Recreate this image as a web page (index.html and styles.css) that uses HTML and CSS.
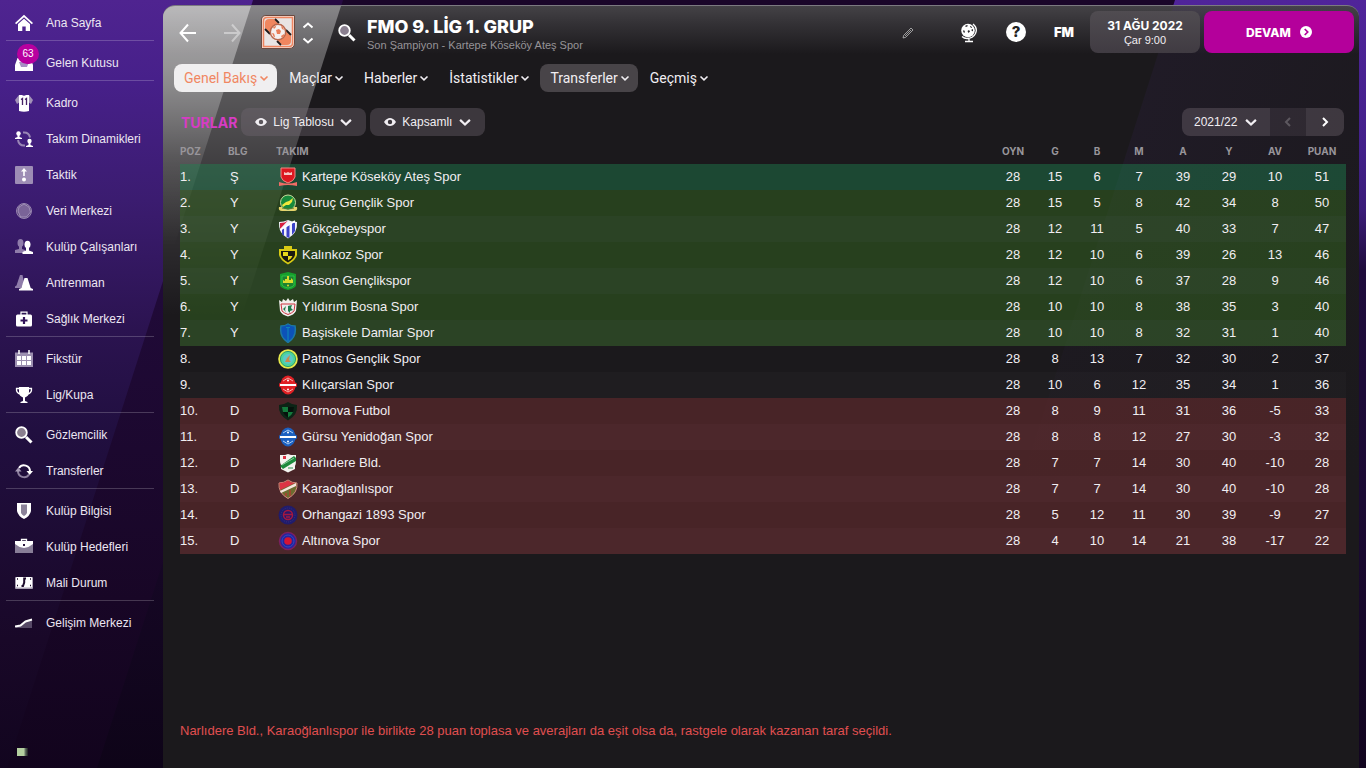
FILE: index.html
```
<!DOCTYPE html>
<html lang="tr">

<head>
	<meta charset="utf-8">
	<title>FMO 9. LİG 1. GRUP</title>
	<link rel="stylesheet" href="styles.css">
</head>

<body>
	<div class="backdrop backdrop-mid"></div>
	<div class="backdrop backdrop-left"></div>
	<div class="backdrop backdrop-right"></div>

	<!-- shared icons -->
	<svg class="defs" width="0" height="0">
		<symbol id="chev" viewBox="0 0 10 10"><path d="M1.500 3.500 5 6.800 8.500 3.500" fill="none" stroke="currentColor" stroke-width="1.600"/></symbol>
		<symbol id="eye" viewBox="0 0 12 8"><path fill="currentColor" fill-rule="evenodd" d="M0 4C2 1 4 0 6 0s4 1 6 4c-2 3-4 4-6 4S2 7 0 4zm6-2.200a2.200 2.200 0 1 0 0 4.400 2.200 2.200 0 0 0 0-4.400z"/></symbol>
		<symbol id="lens" viewBox="0 0 18 18"><circle cx="6.500" cy="6.500" r="5.300" fill="#8a7f8f" stroke="#fff" stroke-width="1.800"/><path d="M11 11l5.500 5.500" stroke="#fff" stroke-width="3"/></symbol>
	</svg>

	<div class="app">
		<nav class="sidebar">
			<ul>
				<li><a href="#"><svg viewBox="0 0 18 18"><path d="M0 9 9 .8 18 9l-1.200 1.200L9 3.200 1.200 10.200z" fill="#fff"/><path d="M3 10l6-5.300L15 10v7h-4.300v-4.500H7.300V17H3z" fill="#fff"/></svg>Ana Sayfa</a></li>
			</ul>
			<ul>
				<li><a href="#"><svg viewBox="0 0 18 18"><path d="M0 11l2.500-7h13L18 11v6H0z" fill="#fff"/><path d="M4 8h10l-2 5H6z" fill="#a78fc4"/></svg>Gelen Kutusu<span class="badge">63</span></a></li>
			</ul>
			<ul>
				<li><a href="#"><svg viewBox="0 0 18 18"><path d="M4 1 0 6l2 4 3-2zM14 1l4 5-2 4-3-2z" fill="#a293b8"/><path d="M4 1h3q2 1.500 4 0h3v16q-5 1.500-10 0z" fill="#fff"/><path d="M6 5.500l1.500-1V11M10 5.500l1.500-1V11" fill="none" stroke="#452066" stroke-width="1.300"/></svg>Kadro</a></li>
				<li><a href="#"><svg viewBox="0 0 18 18"><path d="M8 2.500q6-.5 7 5M3 10q1 6 7 5.500" fill="none" stroke="#9986b5" stroke-width="2"/><circle cx="3.500" cy="3.500" r="2.200" fill="#fff"/><path d="M2.500 5h2v2l2.500 1v1H0V8l2.500-1z" fill="#fff"/><circle cx="14.500" cy="11" r="2.200" fill="#fff"/><path d="M13.500 12h2v3l2.500 1v1h-7v-1l2.500-1z" fill="#fff"/></svg>Takım Dinamikleri</a></li>
				<li><a href="#"><svg viewBox="0 0 18 18"><rect width="18" height="18" rx="1" fill="#9d8db5"/><path d="M9 2l3 3.500H9.800V10H8.200V5.500H6z" fill="#fff"/><circle cx="9" cy="13.500" r="2" fill="#fff"/></svg>Taktik</a></li>
				<li><a href="#"><svg viewBox="0 0 18 18"><circle cx="9" cy="9" r="7.500" fill="#5e4580" stroke="#a99bbd" stroke-width=".8"/><path d="M4 5l5-3 5 3 1.500 5-4 5h-6L3 9z" fill="#7a6498" stroke="#b5a8c8" stroke-width=".7"/></svg>Veri Merkezi</a></li>
				<li><a href="#"><svg viewBox="0 0 18 18"><ellipse cx="5.500" cy="5" rx="3" ry="4" fill="#8f7caa"/><path d="M4 8h3v3l3 1v3H0v-3l4-1z" fill="#8f7caa"/><ellipse cx="12.500" cy="6.500" rx="3" ry="3.800" fill="#fff"/><path d="M11 9h3v3.500l4 1.500v2H7.500v-2l3.500-1.500z" fill="#fff"/></svg>Kulüp Çalışanları</a></li>
				<li><a href="#"><svg viewBox="0 0 18 18"><path d="M5 1h2.500L9 8l-3 6H0v-1.500l1.500-1z" fill="#8f7caa"/><path d="M9.500 4h3l3.200 10 2.300 1v1.500H4V15l2.300-1z" fill="#fff"/></svg>Antrenman</a></li>
				<li><a href="#"><svg viewBox="0 0 18 18"><path d="M6 5V2.200h6V5" fill="none" stroke="#fff" stroke-width="1.200"/><rect x="1" y="4.500" width="16" height="12" rx="1.500" fill="#fff"/><path d="M9 7v7M5.500 10.500h7" stroke="#32135a" stroke-width="2.200"/></svg>Sağlık Merkezi</a></li>
			</ul>
			<ul>
				<li><a href="#"><svg viewBox="0 0 18 18"><path d="M0 2.500h18V17H0z" fill="#9c8fb0"/><path d="M4 0v4M14 0v4" stroke="#fff" stroke-width="1.500"/><path d="M2 6h4v4H2zM7 6h4v4H7zM12 6h4v4h-4zM2 11h4v4H2zM7 11h4v4H7zM12 11h4v4h-4z" fill="#fff"/></svg>Fikstür</a></li>
				<li><a href="#"><svg viewBox="0 0 18 18"><path d="M4 1h10v5q0 4-4 5.500V15l2.500 1v1h-7v-1L8 15v-3.500Q4 10 4 6z" fill="#fff"/><path d="M4 2.500H1.500Q1 7 5.500 8M14 2.500h2.500Q17 7 12.500 8" fill="none" stroke="#fff" stroke-width="1.300"/></svg>Lig/Kupa</a></li>
			</ul>
			<ul>
				<li><a href="#"><svg><use href="#lens"/></svg>Gözlemcilik</a></li>
				<li><a href="#"><svg viewBox="0 0 18 18"><path d="M4 6a6 6 0 0 1 11 3.500" fill="none" stroke="#fff" stroke-width="2"/><path d="M11.500 9H18l-3.300 4z" fill="#fff"/><path d="M14 12.500A6 6 0 0 1 3 9" fill="none" stroke="#8b7d9c" stroke-width="2"/><path d="M0 9.500h6.500L3.300 5.500z" fill="#a79bb5"/></svg>Transferler</a></li>
			</ul>
			<ul>
				<li><a href="#"><svg viewBox="0 0 18 18"><path d="M2 1h14v8q-1 5-7 8-6-3-7-8z" fill="#fff"/><path d="M6 2.500h6V11q-1 2-3 3-2-1-3-3z" fill="#8b8299"/></svg>Kulüp Bilgisi</a></li>
				<li><a href="#"><svg viewBox="0 0 18 18"><path d="M6.500 4V1.500h5V4" fill="none" stroke="#fff" stroke-width="1.300"/><path d="M0 4h18v11H0z" fill="#887e97"/><path d="M0 3h18v3q-4 3.500-9 4-5-.5-9-4z" fill="#fff"/><path d="M8 6h2v2H8z" fill="#2a143c"/></svg>Kulüp Hedefleri</a></li>
				<li><a href="#"><svg viewBox="0 0 18 18"><rect y="3" width="18" height="12" rx="1" fill="#aaa1b3"/><rect x="1" y="3" width="16" height="10.500" rx="1" fill="#fff"/><path d="M11 4.500H9.200v4L8 12H6.500" fill="none" stroke="#1d0c2c" stroke-width="2"/><path d="M2 5h1M15 5h1M2 11.500h1M15 11.500h1" stroke="#1d0c2c" stroke-width="1.500"/></svg>Mali Durum</a></li>
			</ul>
			<ul>
				<li><a href="#"><svg viewBox="0 0 18 18"><path d="M1 13l5-1.500 5-4 6-2V14H1z" fill="#564966"/><path d="M0 12.500l5.500-1 5-4L17 5.500" fill="none" stroke="#fff" stroke-width="2"/></svg>Gelişim Merkezi</a></li>
			</ul>
			<span class="status"></span>
		</nav>

		<main class="panel">
			<header class="topbar">
				<button class="icon-btn" aria-label="Geri"><svg width="18" height="20" viewBox="0 0 18 20"><path d="M17 10H2M9 1.500 1.500 10 9 18.500" fill="none" stroke="#fff" stroke-width="2"/></svg></button>
				<button class="icon-btn forward" aria-label="İleri"><svg width="18" height="20" viewBox="0 0 18 20"><path d="M1 10h15M9 1.500l7.500 8.500L9 18.500" fill="none" stroke="#fff" stroke-width="2"/></svg></button>
				<svg class="comp-logo" width="34" height="34" viewBox="0 0 34 34">
					<path d="M5 .5h28.500V28q0 5.500-5.500 5.500H.500V5Q.5.500 5 .500z" fill="#f6dcd2" stroke="#6b4a40"/>
					<path d="M6 2.500h25.500V28q0 3.500-3.500 3.500H2.500V6q0-3.500 3.500-3.500z" fill="#e9e4e3" stroke="#ef8560" stroke-width="1.500"/>
					<path d="M4 8q0-4 4-4h5l17 17v5q0 4-4 4h-5L4 13z" fill="#f0865f"/>
					<path d="M14 4l4 4M25 15l5 5M4 14l5 5M16 26l4 4" stroke="#1e1a1a" stroke-width="1.800"/>
					<circle cx="17" cy="17" r="7.700" fill="#f5efee" stroke="#b8684e" stroke-width="1.500"/>
					<path d="M15 15l3-1 2 2-1 3h-3zM11 18l2 .5 1 3-1 1zM20 21l3-2v2l-2 2zM20 11l2 1 1 3-2-1zM12 12l3-1v1l-2 2z" fill="#ea7e58"/>
				</svg>
				<div class="stepper">
					<button aria-label="Önceki"><svg width="12" height="7" viewBox="0 0 12 7"><path d="M1.500 5.500 6 1.500l4.500 4" fill="none" stroke="#fff" stroke-width="2"/></svg></button>
					<button aria-label="Sonraki"><svg width="12" height="7" viewBox="0 0 12 7"><path d="M1.500 1.500 6 5.500l4.500-4" fill="none" stroke="#fff" stroke-width="2"/></svg></button>
				</div>
				<button class="icon-btn search" aria-label="Ara"><svg width="18" height="18"><use href="#lens"/></svg></button>
				<div class="heading">
					<h1>FMO 9. LİG 1. GRUP</h1>
					<p>Son Şampiyon - Kartepe Köseköy Ateş Spor</p>
				</div>
				<div class="tools">
					<button class="icon-btn" aria-label="Düzenle"><svg width="12" height="12" viewBox="0 0 12 12"><path d="M1 11l.7-2.700L9 1l2 2-7.300 7.300zM3 9l6-6" fill="none" stroke="#bbb" stroke-width=".8"/></svg></button>
					<button class="icon-btn" aria-label="Dünya"><svg width="18" height="20" viewBox="0 0 18 20"><circle cx="8" cy="7.500" r="6.800" fill="#fff"/><path d="M13 1q5 4 2.500 9.500Q13 15.500 7 15.500q-3 0-5-2M9 15v3M5 18.500h8" fill="none" stroke="#fff" stroke-width="1.300"/><path d="M5 3l2-1 1 1-2 1zM10 3l2 1v1l-2-1zM7.500 8l1.500-1 1 1.500-1.500 1.500zM3 8l1-1 1 2-1 1zM11 7l2-1v2.500z" fill="#29272b"/></svg></button>
					<button class="help" aria-label="Yardım">?</button>
					<button class="fm">FM</button>
					<button class="date"><b>31 AĞU 2022</b><span>Çar 9:00</span></button>
					<button class="continue">DEVAM <svg width="12" height="12" viewBox="0 0 12 12"><circle cx="6" cy="6" r="6" fill="#fff"/><path d="M4.700 3l3 3-3 3" fill="none" stroke="#b4009b" stroke-width="1.700"/></svg></button>
				</div>
			</header>

			<nav class="tabs">
				<button class="tab active">Genel Bakış <svg><use href="#chev"/></svg></button>
				<button class="tab">Maçlar <svg><use href="#chev"/></svg></button>
				<button class="tab">Haberler <svg><use href="#chev"/></svg></button>
				<button class="tab">İstatistikler <svg><use href="#chev"/></svg></button>
				<button class="tab hover">Transferler <svg><use href="#chev"/></svg></button>
				<button class="tab">Geçmiş <svg><use href="#chev"/></svg></button>
			</nav>

			<div class="filters">
				<h2>TURLAR</h2>
				<label class="pill">
					<svg class="eye"><use href="#eye"/></svg>
					<select aria-label="Görünüm"><option>Lig Tablosu</option></select>
					<svg class="arrow"><use href="#chev"/></svg>
				</label>
				<label class="pill">
					<svg class="eye"><use href="#eye"/></svg>
					<select aria-label="Ayrıntı"><option>Kapsamlı</option></select>
					<svg class="arrow"><use href="#chev"/></svg>
				</label>
				<div class="season">
					<label class="pill">
						<select aria-label="Sezon"><option>2021/22</option></select>
						<svg class="arrow"><use href="#chev"/></svg>
					</label>
					<button class="prev" aria-label="Önceki sezon" disabled><svg width="8" height="10" viewBox="0 0 8 10"><path d="M6 1 2 5l4 4" fill="none" stroke="currentColor" stroke-width="2"/></svg></button>
					<button class="next" aria-label="Sonraki sezon"><svg width="8" height="10" viewBox="0 0 8 10"><path d="M2 1l4 4-4 4" fill="none" stroke="currentColor" stroke-width="2"/></svg></button>
				</div>
			</div>

			<table class="league">
				<thead>
					<tr><th class="c-pos">POZ</th><th class="c-info">BLG</th><th class="c-team">TAKIM</th><th class="c-s">OYN</th><th class="c-s">G</th><th class="c-s">B</th><th class="c-s">M</th><th class="c-m">A</th><th class="c-m">Y</th><th class="c-m">AV</th><th class="c-l">PUAN</th></tr>
				</thead>
				<tbody>
					<tr class="champ"><td>1.</td><td>Ş</td><td><svg viewBox="0 0 20 20"><path d="M3 1h14v9q-1 4-7 6-6-2-7-6z" fill="#dc1820" stroke="#f08a86"/><path d="M6 5l2 1 2-1 2 1 2-1v3H6z" fill="#f6c8c4"/><path d="M1 15q9 3 18 0v4q-9-2-18 0z" fill="#ef6c66"/></svg>Kartepe Köseköy Ateş Spor</td><td>28</td><td>15</td><td>6</td><td>7</td><td>39</td><td>29</td><td>10</td><td>51</td></tr>
					<tr class="promo"><td>2.</td><td>Y</td><td><svg viewBox="0 0 20 20"><path d="M1 14q-1 4 3 4h12q4 0 3-4z" fill="#e6d36a"/><circle cx="10" cy="9.500" r="7.500" fill="#178a3c" stroke="#c8dc9c"/><path d="M4 12l4-3 3-1 4-3-1 4-3 3-3 0-3 2z" fill="#f0e83c"/><path d="M4 15q6 2 12 0" stroke="#5b7a2c" fill="none"/></svg>Suruç Gençlik Spor</td><td>28</td><td>15</td><td>5</td><td>8</td><td>42</td><td>34</td><td>8</td><td>50</td></tr>
					<tr class="promo alt"><td>3.</td><td>Y</td><td><svg viewBox="0 0 20 20"><path d="M1 3q5 0 9-2 4 2 9 2 1 11-9 16.500Q0 14 1 3z" fill="#f2f2fa"/><path d="M2 4q5 0 8-2.500L2 10z" fill="#d92042"/><path d="M4 10v5l2 2V8zM8.500 7v11l3 1V5zM14 4v12l3-4V4z" fill="#3c42c8"/><path d="M2 11L17 2" stroke="#fff" stroke-width="1.500"/></svg>Gökçebeyspor</td><td>28</td><td>12</td><td>11</td><td>5</td><td>40</td><td>33</td><td>7</td><td>47</td></tr>
					<tr class="promo"><td>4.</td><td>Y</td><td><svg viewBox="0 0 20 20"><path d="M6 1h8v3h5v6q-1 5-9 9.500Q2 15 1 10V4h5z" fill="#d8cb14"/><path d="M3 6h14v4q-1 4-7 7.500Q4 14 3 10z" fill="#1a1a10"/><path d="M5 7h5v4H5zM10 11h4.500l-1.500 2.500-3 2z" fill="#e8d81c"/></svg>Kalınkoz Spor</td><td>28</td><td>12</td><td>10</td><td>6</td><td>39</td><td>26</td><td>13</td><td>46</td></tr>
					<tr class="promo alt"><td>5.</td><td>Y</td><td><svg viewBox="0 0 20 20"><path d="M2 3l4-1 4-1 4 1 4 1v11q0 3-8 5-8-2-8-5z" fill="#16a02c"/><path d="M4 5h12v9q-1 2-6 3-5-1-6-3z" fill="#1d8230" stroke="#34c84c" stroke-width=".8"/><path d="M5 12V9l2 1V8h2V5h2v4h2V7l2 2v3z" fill="#d8dc2c"/><circle cx="10" cy="14.500" r="1" fill="#d8dc2c"/></svg>Sason Gençlikspor</td><td>28</td><td>12</td><td>10</td><td>6</td><td>37</td><td>28</td><td>9</td><td>46</td></tr>
					<tr class="promo"><td>6.</td><td>Y</td><td><svg viewBox="0 0 20 20"><path d="M1 3l3 2 1-3 3 2 2-3 2 3 3-2 1 3 3-2-1 11q-2 4-8 5.500Q4 18 2 14z" fill="#f2f0ee"/><path d="M3 7h14l-1 7q-2 2-6 3.500Q6 16 4 14z" fill="#eee" stroke="#cc3440"/><path d="M10 9l4-1-1 3 2 2-3 1v2l-2-2zM5 12l3-3-1 4 1 2z" fill="#1c7a4a"/></svg>Yıldırım Bosna Spor</td><td>28</td><td>10</td><td>10</td><td>8</td><td>38</td><td>35</td><td>3</td><td>40</td></tr>
					<tr class="promo alt"><td>7.</td><td>Y</td><td><svg viewBox="0 0 20 20"><path d="M3 3q4 0 7-2 3 2 7 2 2 11-7 16.500Q1 14 3 3z" fill="#0c52b8" stroke="#1c78a4" stroke-width="1.500"/><path d="M10 4v14M8 4.500h4" stroke="#0f84b8" stroke-width="1.200"/></svg>Başiskele Damlar Spor</td><td>28</td><td>10</td><td>10</td><td>8</td><td>32</td><td>31</td><td>1</td><td>40</td></tr>
					<tr><td>8.</td><td></td><td><svg viewBox="0 0 20 20"><circle cx="10" cy="10" r="9.800" fill="#e6e84c"/><circle cx="10" cy="10" r="7.600" fill="#4cd49c" stroke="#2a9c70"/><circle cx="10" cy="10" r="5" fill="#5cc8c8"/><path d="M7 13l2-4 3-3-1 5 2 2z" fill="#c88a4c"/></svg>Patnos Gençlik Spor</td><td>28</td><td>8</td><td>13</td><td>7</td><td>32</td><td>30</td><td>2</td><td>37</td></tr>
					<tr class="alt"><td>9.</td><td></td><td><svg viewBox="0 0 20 20"><ellipse cx="10" cy="10" rx="7.500" ry="9.500" fill="#e02024"/><path d="M5 6l5-3 5 3M5 14l5 3 5-3" fill="none" stroke="#f4b0a8"/><rect x="1" y="7.500" width="18" height="5" rx="2" fill="#e02024"/><path d="M2 10h16" stroke="#fff" stroke-width="2"/><circle cx="10" cy="5.500" r="1" fill="#fff"/><circle cx="10" cy="14.500" r="1" fill="#fff"/></svg>Kılıçarslan Spor</td><td>28</td><td>10</td><td>6</td><td>12</td><td>35</td><td>34</td><td>1</td><td>36</td></tr>
					<tr class="releg"><td>10.</td><td>D</td><td><svg viewBox="0 0 20 20"><path d="M1 4l5-1 4-2 4 2 5 1q1 10-9 15.500Q0 14 1 4z" fill="#0c2416"/><path d="M4 6h6v5H5zM10 11h5q-1 3-5 5.500z" fill="#147a3c"/><path d="M10 6h6l-1 5h-5zM5 11h5v5.500Q6 14 5 11z" fill="#06120c"/></svg>Bornova Futbol</td><td>28</td><td>8</td><td>9</td><td>11</td><td>31</td><td>36</td><td>-5</td><td>33</td></tr>
					<tr class="releg alt"><td>11.</td><td>D</td><td><svg viewBox="0 0 20 20"><ellipse cx="10" cy="10" rx="7.500" ry="9.500" fill="#1c60c0"/><path d="M5 6l5-3 5 3M5 14l5 3 5-3" fill="none" stroke="#a8ccf4"/><rect x="1" y="7.500" width="18" height="5" rx="2" fill="#1c60c0"/><path d="M2 10h16" stroke="#fff" stroke-width="2"/><circle cx="10" cy="5.500" r="1" fill="#fff"/><circle cx="10" cy="14.500" r="1" fill="#fff"/></svg>Gürsu Yenidoğan Spor</td><td>28</td><td>8</td><td>8</td><td>12</td><td>27</td><td>30</td><td>-3</td><td>32</td></tr>
					<tr class="releg"><td>12.</td><td>D</td><td><svg viewBox="0 0 20 20"><path d="M2 2h5l3-1 3 1h5v6q0 3-1 5v3l-7 3.500-7-3.500v-4q-1-2-1-4z" fill="#f4f4f0"/><path d="M2 13L16 3l2 2v3L5 16z" fill="#1c8a3c"/><path d="M4 12L16 5" stroke="#8cc89c"/><path d="M5 3h3v3H5z" fill="#dc3444"/><path d="M10 15h5" stroke="#2c9050"/></svg>Narlıdere Bld.</td><td>28</td><td>7</td><td>7</td><td>14</td><td>30</td><td>40</td><td>-10</td><td>28</td></tr>
					<tr class="releg alt"><td>13.</td><td>D</td><td><svg viewBox="0 0 20 20"><path d="M1 4q5 0 9-3 4 3 9 3 1 10-9 15.500Q0 14 1 4z" fill="#6c6c30" stroke="#d48a80"/><path d="M1.500 4q5 0 8.500-2.500Q13 4 17 4L2 11z" fill="#dc3444"/><path d="M2 12L18 4v3L3 14z" fill="#f4e4dc"/><path d="M8 14v3M12 11v6" stroke="#b03c30" stroke-width="1.500"/></svg>Karaoğlanlıspor</td><td>28</td><td>7</td><td>7</td><td>14</td><td>30</td><td>40</td><td>-10</td><td>28</td></tr>
					<tr class="releg"><td>14.</td><td>D</td><td><svg viewBox="0 0 20 20"><circle cx="10" cy="10" r="9.500" fill="#201c6c"/><circle cx="10" cy="10" r="7" fill="none" stroke="#38307c" stroke-dasharray="1 1"/><circle cx="10" cy="10" r="4.500" fill="#28186c" stroke="#a41840" stroke-width="1.500"/><path d="M6 9.500h8M8 12h4" stroke="#a41840" stroke-width="1.500"/></svg>Orhangazi 1893 Spor</td><td>28</td><td>5</td><td>12</td><td>11</td><td>30</td><td>39</td><td>-9</td><td>27</td></tr>
					<tr class="releg alt"><td>15.</td><td>D</td><td><svg viewBox="0 0 20 20"><circle cx="10" cy="10" r="8.500" fill="#2424a0" stroke="#7c2060" stroke-width="1.500"/><circle cx="10" cy="10" r="6" fill="none" stroke="#3848b8"/><circle cx="10" cy="10" r="3.800" fill="#d41434"/></svg>Altınova Spor</td><td>28</td><td>4</td><td>10</td><td>14</td><td>21</td><td>38</td><td>-17</td><td>22</td></tr>
				</tbody>
			</table>

			<p class="note">Narlıdere Bld., Karaoğlanlıspor ile birlikte 28 puan toplasa ve averajları da eşit olsa da, rastgele olarak kazanan taraf seçildi.</p>
		</main>
	</div>
</body>

</html>
```

FILE: styles.css
```
* {
	box-sizing: border-box;
}

body {
	margin: 0;
	background: linear-gradient(#1a0629, #180829 500px, #0e0418);
	color: #f1eef2;
	font-family: "Liberation Sans", Arial, sans-serif;
	font-size: 13px;
}

button, select {
	font: inherit;
	color: inherit;
	background: none;
	border: none;
	padding: 0;
	margin: 0;
	cursor: pointer;
}

h1, h2, p, ul {
	margin: 0;
	padding: 0;
}

.defs {
	position: absolute;
}

/* diagonal light bands behind everything */
.backdrop {
	position: absolute;
	inset: 0;
}

.backdrop-left {
	background: linear-gradient(#4f2490, #47208a 80px, #3b1c70 200px, #2b1350 330px, #210f40 430px, #190828 640px, #12051f);
	clip-path: polygon(0 0, 253px 0, 7px 100%, 0 100%);
}

.backdrop-mid {
	background: linear-gradient(#270a43, #200a38 300px, #180626 600px, #12041d);
	clip-path: polygon(0 0, 343px 0, 97px 100%, 0 100%);
}

.backdrop-right {
	background: linear-gradient(#50249a, #42208a 150px, #3a1c78 210px, #1f0c3c 270px, #1b0a33 500px, #12051f);
	clip-path: polygon(1175px 0, 100% 0, 100% 100%, 929px 100%);
}

.app {
	position: relative;
	display: flex;
	min-height: 100vh;
}

/* sidebar */
.sidebar {
	width: 163px;
	flex: none;
	display: flex;
	flex-direction: column;
	gap: 3px;
	padding: 4px 9px 12px 6px;
}

.sidebar ul {
	list-style: none;
	border-bottom: 1px solid rgba(255, 255, 255, 0.2);
}

.sidebar ul:last-of-type {
	border: none;
}

.sidebar a {
	position: relative;
	display: flex;
	align-items: center;
	gap: 13px;
	height: 36px;
	padding: 2px 0 0 9px;
	color: #ece6f2;
	font-size: 12px;
	text-decoration: none;
	white-space: nowrap;
}

.sidebar svg {
	width: 18px;
	height: 18px;
	flex: none;
}

.badge {
	position: absolute;
	left: 11px;
	top: 0;
	width: 22px;
	height: 20px;
	border-radius: 10px;
	background: #b8009f;
	color: #fff;
	font-size: 10px;
	line-height: 20px;
	text-align: center;
}

.status {
	width: 11px;
	height: 8px;
	margin: auto 0 0 11px;
	background: linear-gradient(90deg, #b4cfa0 7px, #6a7a68 8px, #1a1a20);
}

/* main panel */
.panel {
	flex: 1;
	display: flex;
	flex-direction: column;
	margin: 5px 7px 0 0;
	padding: 0 13px 28px 17px;
	position: relative;
	border-top: 1px solid #7c7a80;
	border-radius: 12px 12px 0 0;
	background:
		linear-gradient(rgba(27, 25, 28, 0) 150px, #1b191c 480px),
		linear-gradient(107.7deg, transparent 962px, rgba(90, 50, 160, 0.08) 963px, transparent 1300px),
		linear-gradient(#444246, #333135 18px, #1b191c 48px);
	overflow: hidden;
}

.panel::before,
.panel::after {
	content: "";
	position: absolute;
	inset: 0;
}

.panel::before {
	background: linear-gradient(rgba(255, 255, 255, 0.36), rgba(255, 255, 255, 0.28) 80px, rgba(255, 255, 255, 0.16) 160px, rgba(255, 255, 255, 0) 310px);
	clip-path: polygon(0 0, 178px 0, 0 556px);
}

.panel::after {
	background: linear-gradient(rgba(255, 255, 255, 0.42), rgba(255, 255, 255, 0.34) 60px, rgba(255, 255, 255, 0.12) 150px, rgba(255, 255, 255, 0) 240px);
	clip-path: polygon(0 0, 88px 0, 0 275px);
}

.panel > * {
	position: relative;
	z-index: 1;
}

.topbar {
	display: flex;
	align-items: center;
	height: 42px;
	margin: 5px -8px 0 -1px;
}

.icon-btn {
	padding-top: 2px;
}

.icon-btn svg {
	display: block;
}

.forward {
	margin-left: 26px;
	opacity: 0.4;
}

.comp-logo {
	margin-left: 20px;
}

.stepper {
	display: flex;
	flex-direction: column;
	gap: 8px;
	margin-left: 7px;
	padding-top: 2px;
}

.stepper svg {
	display: block;
}

.search {
	margin-left: 24px;
}

.heading {
	margin-left: 11px;
	padding-top: 5px;
}

h1 {
	font-family: Inter, sans-serif;
	font-size: 18px;
	font-weight: 800;
	line-height: 20px;
	color: #fff;
}

.heading p {
	font-size: 11px;
	line-height: 16px;
	color: #969397;
}

.tools {
	display: flex;
	align-items: center;
	margin-left: auto;
}

.tools .icon-btn {
	margin-right: 46px;
}

.tools .icon-btn + .icon-btn {
	margin-right: 28px;
}

.help {
	width: 20px;
	height: 20px;
	margin-right: 28px;
	border-radius: 50%;
	background: #fff;
	color: #222;
	font-family: Inter, sans-serif;
	font-size: 15px;
	font-weight: 800;
	line-height: 20px;
}

.fm {
	margin-right: 16px;
	font-family: Inter, sans-serif;
	font-size: 13px;
	font-weight: 900;
	color: #fff;
}

.date {
	width: 110px;
	height: 42px;
	padding-top: 2px;
	border-radius: 8px;
	background: linear-gradient(#504c51, #403b42);
	font-size: 11px;
	line-height: 14px;
}

.date b,
.date span {
	display: block;
}

.date b {
	font-family: Inter, sans-serif;
	font-size: 12px;
	color: #fff;
}

.continue {
	display: flex;
	align-items: center;
	justify-content: center;
	gap: 9px;
	width: 150px;
	height: 42px;
	margin-left: 4px;
	border-radius: 8px;
	background: #b4009b;
	color: #fff;
	font-family: Inter, sans-serif;
	font-size: 12px;
	font-weight: 800;
}

.tabs {
	display: flex;
	gap: 2px;
	margin: 11px 0 0 -6px;
	font-family: Roboto, sans-serif;
	font-size: 14px;
}

.tab {
	display: flex;
	align-items: center;
	gap: 2px;
	height: 28px;
	padding: 0 8px 0 10px;
	border-radius: 8px;
}

.tab svg {
	width: 10px;
	height: 10px;
}

.tab.active {
	background: #f0eff0;
	color: #f08762;
}

.tab.hover {
	background: #484448;
}

.filters {
	display: flex;
	align-items: center;
	gap: 4px;
	margin: 16px 2px 0 1px;
}

h2 {
	font-family: Inter, sans-serif;
	font-size: 14px;
	font-weight: 700;
	color: #d63cc4;
}

.pill {
	display: flex;
	align-items: center;
	height: 28px;
	padding: 0 13px 0 14px;
	border-radius: 8px;
	background: rgba(115, 105, 115, 0.38);
	font-size: 12px;
}

.pill select {
	appearance: none;
}

.eye {
	width: 12px;
	height: 8px;
	margin-right: 6px;
}

.arrow {
	flex: none;
	width: 14px;
	height: 14px;
	margin-left: 5px;
	pointer-events: none;
}

.season {
	display: flex;
	margin-left: auto;
	border-radius: 8px;
	overflow: hidden;
}

.season .pill {
	width: 88px;
	justify-content: space-between;
	padding: 0 12px;
	border-radius: 0;
}

.prev,
.next {
	width: 36px;
	background: rgba(115, 105, 115, 0.2);
	color: #5d585f;
}

.next {
	width: 38px;
	background: rgba(115, 105, 115, 0.38);
	color: #fff;
}

/* league table */
.league {
	width: 100%;
	border-collapse: collapse;
	table-layout: fixed;
	margin-top: 3px;
}

.league th {
	height: 25px;
	padding: 0 0 1px;
	color: #98959a;
	font-family: Inter, sans-serif;
	font-size: 10px;
	font-weight: 700;
	text-align: center;
}

.league td {
	height: 26px;
	padding: 0 0 2px;
	text-align: center;
}

.league th:nth-child(-n+3),
.league td:nth-child(-n+3) {
	text-align: left;
}

.league td:nth-child(2),
.league td:nth-child(3) {
	padding-left: 2px;
}

.c-pos,
.c-info,
.c-l {
	width: 48px;
}

.c-s {
	width: 42px;
}

.c-m {
	width: 46px;
}

/* negative margins keep the crest from stretching the text line */
.league td svg {
	width: 20px;
	height: 20px;
	margin: -6px 4px -6px 0;
	vertical-align: middle;
}

.champ {
	background: rgba(30, 130, 80, 0.45);
}

.promo {
	background: rgba(51, 103, 32, 0.5);
}

.alt {
	background: rgba(255, 255, 255, 0.02);
}

.promo.alt {
	background: rgba(60, 110, 45, 0.5);
}

.releg {
	background: rgba(117, 47, 50, 0.5);
}

.releg.alt {
	background: rgba(125, 54, 58, 0.5);
}

.note {
	margin-top: auto;
	color: #e04f50;
	line-height: 18px;
}
```
